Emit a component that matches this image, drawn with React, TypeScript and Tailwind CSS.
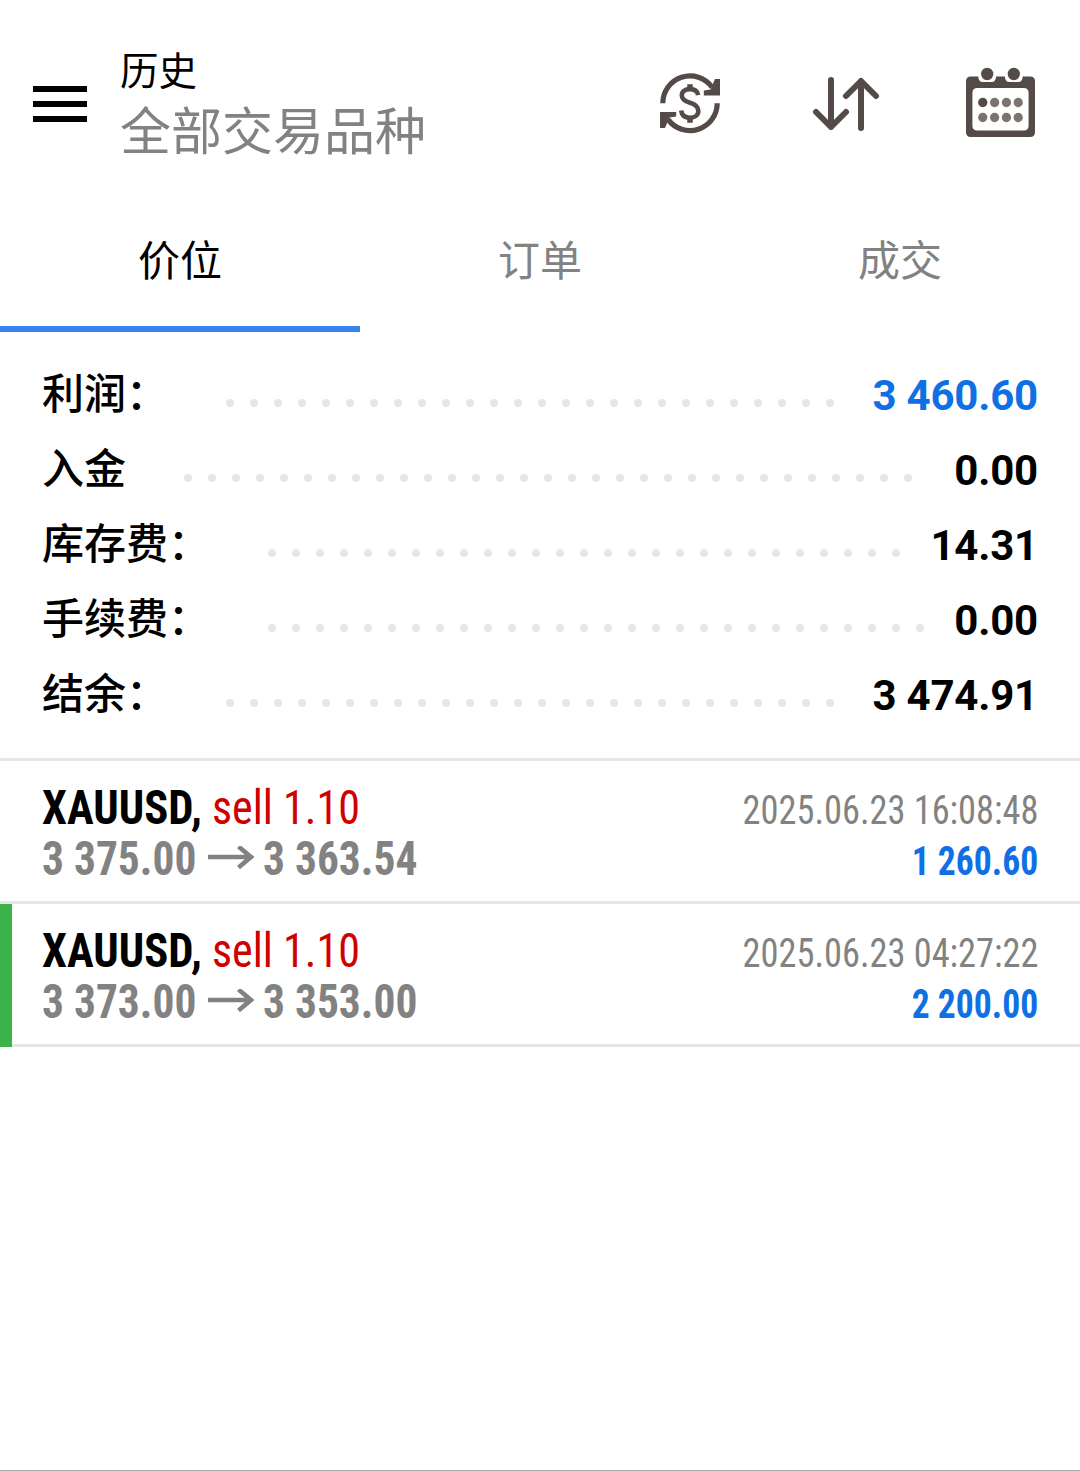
const CJK = "font-['Noto_Sans_CJK_SC',sans-serif]";
const CONDENSED = "font-['Roboto_Condensed',Roboto,sans-serif] [font-stretch:75%]";

const tabs = ['价位', '订单', '成交'];

const summary = [
  { label: '利润：', value: '3 460.60', dots: 26, blue: true },
  { label: '入金', value: '0.00', dots: 31, blue: false },
  { label: '库存费：', value: '14.31', dots: 27, blue: false },
  { label: '手续费：', value: '0.00', dots: 28, blue: false },
  { label: '结余：', value: '3 474.91', dots: 26, blue: false },
];

const deals = [
  { open: '3 375.00', close: '3 363.54', time: '2025.06.23 16:08:48', profit: '1 260.60', marked: false },
  { open: '3 373.00', close: '3 353.00', time: '2025.06.23 04:27:22', profit: '2 200.00', marked: true },
];

function CurrencyIcon() {
  return (
    <svg width="62" height="62" viewBox="0 0 62 62" fill="none" stroke="#544a48">
      <path d="M3.800 30.300A27.200 27.200 0 0 1 53 14.200" strokeWidth="5.200" />
      <path d="M58.200 30.300A27.200 27.200 0 0 1 9 46.400" strokeWidth="5.200" />
      <path d="M61 6V22.500H44.800V17.500L51.500 16.500 56 6Z" fill="#544a48" stroke="none" />
      <path d="M1 55V39H17.200V43.500L10.500 44.500 6 55Z" fill="#544a48" stroke="none" />
      <path d="M39.200 22.200C38.500 18.200 35.500 16.100 31 16.100C26 16.100 22.800 18.500 22.800 22.300C22.800 26.500 26 28.400 31 29.800C36.300 31.300 39.300 33.500 39.300 37.900C39.300 42 36 44.700 31 44.700C26 44.700 22.700 42.100 22.200 37.500" strokeWidth="4.600" />
      <path d="M31 11.300V17M31 44V49.700" strokeWidth="5.500" />
    </svg>
  );
}

function SortIcon() {
  return (
    <svg width="68" height="56" viewBox="0 0 68 56" fill="none" stroke="#544a48" strokeWidth="6" strokeLinecap="round" strokeLinejoin="round">
      <path d="M19 4V51M4 36L19 51L34 36M16.500 47.500H21.500" />
      <path d="M49 52V5M34 20L49 5L64 20M46.500 8.500H51.500" />
    </svg>
  );
}

function CalendarIcon() {
  return (
    <svg width="69" height="70" viewBox="0 0 70 70" preserveAspectRatio="none">
      <path
        fillRule="evenodd"
        fill="#544a48"
        d="M5 9.500H12.500C12.500 13 14 15 17 15H26C29 15 30.500 13 30.500 9.500H39.500C39.500 13 41 15 44 15H53C56 15 57.500 13 57.500 9.500H65Q70 9.500 70 14.500V65Q70 70 65 70H5Q0 70 0 65V14.500Q0 9.500 5 9.500ZM11.500 21Q6.500 21 6.500 26V58.500Q6.500 63.500 11.500 63.500H58.500Q63.500 63.500 63.500 58.500V26Q63.500 21 58.500 21Z"
      />
      <g fill="#544a48">
        <circle cx="21.500" cy="7" r="6.200" />
        <circle cx="48.500" cy="7" r="6.200" />
        <circle cx="17" cy="35.500" r="4.700" />
      </g>
      <g fill="#7b7370">
        <circle cx="29" cy="35.500" r="4.700" />
        <circle cx="41" cy="35.500" r="4.700" />
        <circle cx="53" cy="35.500" r="4.700" />
        <circle cx="17" cy="50.500" r="4.700" />
        <circle cx="29" cy="50.500" r="4.700" />
        <circle cx="41" cy="50.500" r="4.700" />
        <circle cx="53" cy="50.500" r="4.700" />
      </g>
    </svg>
  );
}

function PriceArrow() {
  return (
    <svg className="mr-[9px] ml-3 shrink-0" width="46" height="26" viewBox="0 0 46 26" fill="none" stroke="#828282" strokeWidth="4.500">
      <path d="M0 11H43M30.500 0.500L43 11L30.500 21.500" />
    </svg>
  );
}

export default function App() {
  return (
    <div className={`flex h-[1471px] w-[1080px] flex-col overflow-hidden border-b border-[#aaaaaa] bg-white text-black ${CJK}`}>
      <header className="flex h-48 shrink-0 items-start">
        <button aria-label="菜单" className="mt-[86px] ml-[33px] flex w-[54px] flex-col gap-[9px]">
          <span className="h-1.5 w-full bg-black" />
          <span className="h-1.5 w-full bg-black" />
          <span className="h-1.5 w-full bg-black" />
        </button>
        <div className="mt-11 ml-[33px] flex-1">
          <h1 className="text-[38.500px] leading-[48px]">历史</h1>
          <p className="text-[51px] leading-[72px] text-[#828282]">全部交易品种</p>
        </div>
        <button aria-label="币种" className="mt-[73px] mr-[91px]"><CurrencyIcon /></button>
        <button aria-label="排序" className="mt-[76px] mr-[86px]"><SortIcon /></button>
        <button aria-label="日期" className="mt-[67px] mr-[45px]"><CalendarIcon /></button>
      </header>

      <nav className="grid h-[140px] shrink-0 grid-cols-3">
        {tabs.map((tab, i) => (
          <button
            key={tab}
            className={`border-b-6 pb-[3px] text-[42px] leading-none ${i === 0 ? 'border-[#3982f0] text-black' : 'border-transparent text-[#828282]'}`}
          >
            {tab}
          </button>
        ))}
      </nav>

      <section className="shrink-0 border-b-3 border-[#e6e6e6] pt-6 pr-[42px] pb-[27px] pl-[42px]">
        {summary.map((row) => (
          <div key={row.label} className="flex h-[75px] items-start">
            <span className="text-[42px] leading-[70px] font-medium">{row.label}</span>
            <span className="mt-[43px] ml-[58px] flex flex-1 gap-4">
              {Array.from({ length: row.dots }, (_, i) => (
                <i key={i} className="size-2 shrink-0 rounded-full bg-[#e6e6e6]" />
              ))}
            </span>
            <span className={`font-[Roboto,sans-serif] text-[42px] leading-[80px] font-bold tracking-[-0.200px] ${row.blue ? 'text-[#0f70e6]' : ''}`}>
              {row.value}
            </span>
          </div>
        ))}
      </section>

      <ul className={`whitespace-nowrap ${CONDENSED}`}>
        {deals.map((deal) => (
          <li
            key={deal.time}
            className={`flex h-[143px] ${deal.marked ? 'bg-[#39b34a] pl-3' : ''}`}
          >
            <div className={`flex-1 border-b-3 border-[#e6e6e6] bg-white pt-[21px] pr-[42px] leading-[51px] ${deal.marked ? 'pl-[30px]' : 'pl-[42px]'}`}>
              <div className="flex h-[51px] items-baseline justify-between">
                <span className="flex text-[48px]">
                  <span className="w-[170px] origin-left scale-x-[0.930] font-bold">XAUUSD,</span>
                  <span className="origin-left scale-x-[0.918] text-[#d00000]">sell 1.10</span>
                </span>
                <span className="origin-right scale-x-[0.909] text-[40px] text-[#828282]">{deal.time}</span>
              </div>
              <div className="flex h-[51px] items-baseline justify-between font-bold">
                <span className="flex items-center text-[48px] text-[#828282]">
                  <span className="w-[154px] origin-left scale-x-[0.905]">{deal.open}</span>
                  <PriceArrow />
                  <span className="origin-left scale-x-[0.905]">{deal.close}</span>
                </span>
                <span className="origin-right scale-x-[0.890] text-[40px] text-[#0f70e6]">{deal.profit}</span>
              </div>
            </div>
          </li>
        ))}
      </ul>
    </div>
  );
}
